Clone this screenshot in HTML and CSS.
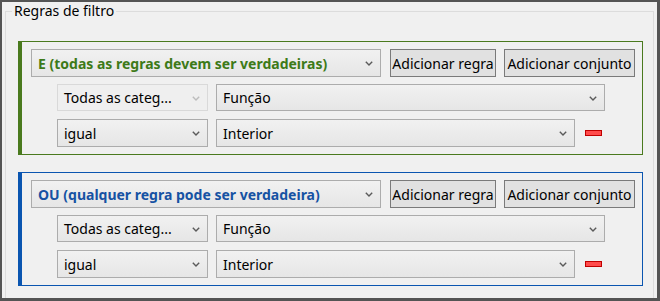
FILE: index.html
```html
<!DOCTYPE html>
<html lang="pt">
<head>
<meta charset="UTF-8">
<meta name="viewport" content="width=device-width, initial-scale=1.0">
<title>Regras de filtro</title>
<link rel="stylesheet" href="styles.css">
</head>
<body>
  <div class="window">
    <fieldset class="rules">
      <legend>Regras de filtro</legend>

      <div class="rule-set set-and">
        <div class="set-head">
          <div class="combo combo-op">
            <span>E (todas as regras devem ser verdadeiras)</span>
            <svg class="chevron" width="8" height="5" viewBox="0 0 8 5"><polyline points="0.8,0.8 4,4 7.2,0.8" fill="none" stroke="currentColor" stroke-width="1.4"></polyline></svg>
          </div>
          <button class="btn btn-rule">Adicionar regra</button>
          <button class="btn btn-set">Adicionar conjunto</button>
        </div>
        <div class="rule rule-first">
          <div class="combo combo-cat disabled">
            <span>Todas as categ...</span>
            <svg class="chevron" width="8" height="5" viewBox="0 0 8 5"><polyline points="0.8,0.8 4,4 7.2,0.8" fill="none" stroke="currentColor" stroke-width="1.4"></polyline></svg>
          </div>
          <div class="combo combo-field">
            <span>Função</span>
            <svg class="chevron" width="8" height="5" viewBox="0 0 8 5"><polyline points="0.8,0.8 4,4 7.2,0.8" fill="none" stroke="currentColor" stroke-width="1.4"></polyline></svg>
          </div>
        </div>
        <div class="rule rule-second">
          <div class="combo combo-cat">
            <span>igual</span>
            <svg class="chevron" width="8" height="5" viewBox="0 0 8 5"><polyline points="0.8,0.8 4,4 7.2,0.8" fill="none" stroke="currentColor" stroke-width="1.4"></polyline></svg>
          </div>
          <div class="combo combo-value">
            <span>Interior</span>
            <svg class="chevron" width="8" height="5" viewBox="0 0 8 5"><polyline points="0.8,0.8 4,4 7.2,0.8" fill="none" stroke="currentColor" stroke-width="1.4"></polyline></svg>
          </div>
          <span class="remove" title="Remover regra"></span>
        </div>
      </div>

      <div class="rule-set set-or">
        <div class="set-head">
          <div class="combo combo-op">
            <span>OU (qualquer regra pode ser verdadeira)</span>
            <svg class="chevron" width="8" height="5" viewBox="0 0 8 5"><polyline points="0.8,0.8 4,4 7.2,0.8" fill="none" stroke="currentColor" stroke-width="1.4"></polyline></svg>
          </div>
          <button class="btn btn-rule">Adicionar regra</button>
          <button class="btn btn-set">Adicionar conjunto</button>
        </div>
        <div class="rule rule-first">
          <div class="combo combo-cat">
            <span>Todas as categ...</span>
            <svg class="chevron" width="8" height="5" viewBox="0 0 8 5"><polyline points="0.8,0.8 4,4 7.2,0.8" fill="none" stroke="currentColor" stroke-width="1.4"></polyline></svg>
          </div>
          <div class="combo combo-field">
            <span>Função</span>
            <svg class="chevron" width="8" height="5" viewBox="0 0 8 5"><polyline points="0.8,0.8 4,4 7.2,0.8" fill="none" stroke="currentColor" stroke-width="1.4"></polyline></svg>
          </div>
        </div>
        <div class="rule rule-second">
          <div class="combo combo-cat">
            <span>igual</span>
            <svg class="chevron" width="8" height="5" viewBox="0 0 8 5"><polyline points="0.8,0.8 4,4 7.2,0.8" fill="none" stroke="currentColor" stroke-width="1.4"></polyline></svg>
          </div>
          <div class="combo combo-value">
            <span>Interior</span>
            <svg class="chevron" width="8" height="5" viewBox="0 0 8 5"><polyline points="0.8,0.8 4,4 7.2,0.8" fill="none" stroke="currentColor" stroke-width="1.4"></polyline></svg>
          </div>
          <span class="remove" title="Remover regra"></span>
        </div>
      </div>
    </fieldset>
  </div>
</body>
</html>
```

FILE: styles.css
```css
:root {
  --frame-color: #545454;
  --window-bg: #f0f0f0;
  --group-line: #dcdcdc;
  --and-color: #4a7a1e;
  --and-text: #3d7a18;
  --or-color: #0a55b0;
  --or-text: #1652a3;
  --combo-border: #acacac;
  --btn-border: #7a7a7a;
  --chevron-color: #5a5a5a;
}

* {
  box-sizing: border-box;
}

html,
body {
  margin: 0;
  height: 100%;
  background-color: var(--frame-color);
  overflow: hidden;
}

body {
  font-family: "Noto Sans", "Open Sans", sans-serif;
  font-size: 14px;
  color: #000;
}

.window {
  margin: 2px 3px 0 2px;
  height: 296px;
  background-color: var(--window-bg);
  overflow: hidden;
}

/* 外框：分組框 */
.rules {
  margin: 0 3px 0 3px;
  padding: 0 10px 40px 6px;
  min-width: 0;
  border: 1px solid var(--group-line);
}

.rules legend {
  padding: 0 2px;
  line-height: 18px;
  font-size: 14px;
}

.rule-set {
  border: 1px solid;
  border-left-width: 4px;
  padding: 7px 7px 7px 9px;
  margin-left: 6px;
}

.set-and {
  margin-top: 21px;
  border-color: var(--and-color);
}

.set-or {
  margin-top: 17px;
  border-color: var(--or-color);
}

.set-head {
  display: flex;
  height: 28px;
}

.combo {
  display: flex;
  align-items: center;
  justify-content: space-between;
  height: 100%;
  padding: 0 7px 0 6px;
  border: 1px solid var(--combo-border);
  background: linear-gradient(#f1f1f1, #e6e6e6);
  white-space: nowrap;
  overflow: hidden;
}

.combo .chevron {
  flex: none;
  color: var(--chevron-color);
  margin-top: 1px;
}

.combo.disabled {
  border-color: #d9d9d9;
  background: #efefef;
}

.combo.disabled .chevron {
  color: #bcbcbc;
}

.combo-op {
  width: 350px;
  font-weight: bold;
}

.set-and .combo-op {
  color: var(--and-text);
}

.set-or .combo-op {
  color: var(--or-text);
}

.btn {
  height: 100%;
  padding: 0;
  border: 1px solid var(--btn-border);
  background-color: #e1e1e1;
  font-family: inherit;
  font-size: 14px;
  color: #000;
  white-space: nowrap;
}

.btn-rule {
  width: 106px;
  margin-left: 9px;
}

.btn-set {
  width: 131px;
  margin-left: 8px;
}

.rule {
  display: flex;
  align-items: center;
  margin-left: 26px;
}

.rule-first {
  height: 27px;
  margin-top: 7px;
}

.rule-second {
  height: 28px;
  margin-top: 8px;
}

.combo-cat {
  width: 151px;
}

.combo-field {
  width: 389px;
  margin-left: 8px;
}

.combo-value {
  width: 359px;
  margin-left: 8px;
}

.remove {
  width: 17px;
  height: 6px;
  margin-left: 10px;
  background-color: #ff4b4b;
  border: 1px solid #c00000;
}
```
